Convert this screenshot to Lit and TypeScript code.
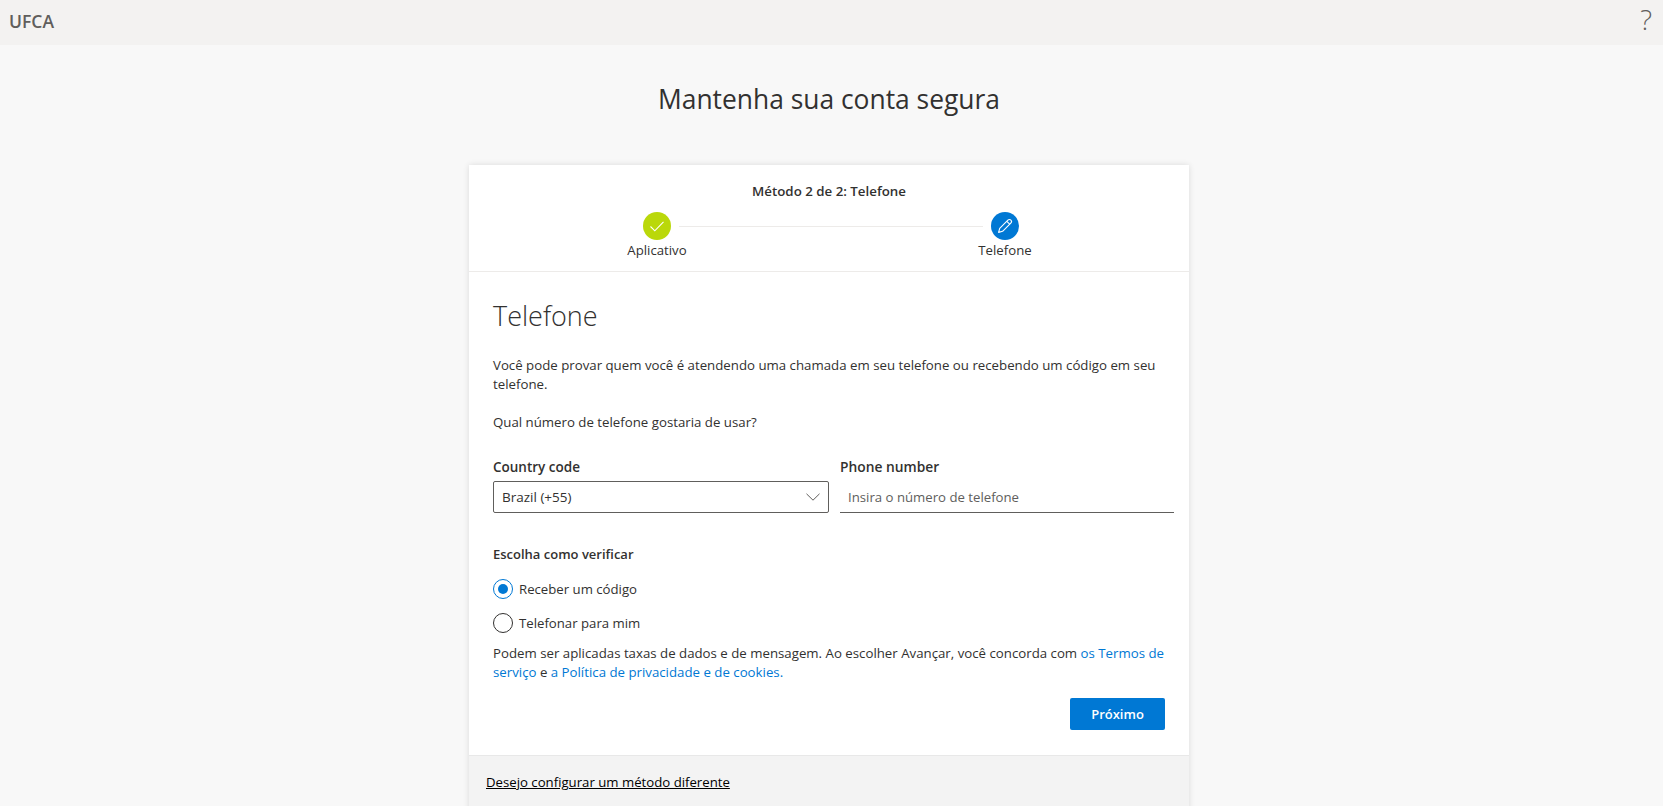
import { LitElement, html, css } from "lit";
import { customElement } from "lit/decorators.js";

@customElement("app-root")
export class AppRoot extends LitElement {
  static styles = css`
    :host { display: block; height: 806px; overflow: hidden; background: #f8f8f8; color: #323130; font-family: "Open Sans", "Noto Sans", sans-serif; font-size: 13.2px; }
    .topbar { height: 45px; background: #f3f2f1; display: flex; align-items: center; justify-content: space-between; padding: 0 9px 4px; box-sizing: border-box; }
    .org { font-size: 17.5px; font-weight: 600; color: #605e5c; }
    .help { font-size: 28px; font-weight: 300; color: #605e5c; line-height: 1; margin-top: -3px; margin-right: 2px; }
    .page { padding-right: 5px; }
    h1 { margin: 0; height: 120px; padding-top: 34px; box-sizing: border-box; text-align: center; font-size: 26.4px; line-height: 40px; font-weight: 400; color: #323130; }
    .card { width: 720px; margin: 0 auto; background: #fff; box-shadow: 0 0 6px rgba(0,0,0,.12); }
    .head { height: 106px; border-bottom: 1px solid #edebe9; }
    .method { text-align: center; font-weight: 600; font-size: 13.3px; line-height: 18px; padding-top: 17px; }
    .stepper { display: grid; grid-template-columns: 96px 1fr 96px; width: 444px; margin: 12px 0 0 140px; }
    .step { display: flex; flex-direction: column; align-items: center; gap: 1px; }
    .circle { width: 28px; height: 28px; border-radius: 50%; display: flex; align-items: center; justify-content: center; }
    .done { background: #bad80a; }
    .active { background: #0078d4; }
    .step-label { font-size: 13.2px; line-height: 18px; white-space: nowrap; }
    .connector { height: 1px; background: #edebe9; margin: 14px -26px 0; }
    .body { padding: 0 24px; height: 483px; box-sizing: border-box; }
    h2 { margin: 0; padding-top: 24px; font-size: 27px; line-height: 40px; font-weight: 300; color: #323130; }
    p { margin: 0; line-height: 19px; font-size: 13.25px; }
    .intro { margin-top: 20px; }
    .question { margin-top: 19px; }
    .fields { display: grid; grid-template-columns: 336px 334px; column-gap: 11px; margin: 25px -9px 0 0; }
    .label { font-weight: 600; line-height: 20px; margin-bottom: 4px; }
    .label.country { font-size: 13.5px; }
    .label.phone { font-size: 13.8px; }
    .select { height: 32px; box-sizing: border-box; border: 1px solid #605e5c; border-radius: 2px; display: flex; align-items: center; justify-content: space-between; padding: 0 8px; font-size: 13.5px; }
    .input { height: 32px; box-sizing: border-box; border-bottom: 1px solid #605e5c; display: flex; align-items: center; padding: 0 8px; color: #605e5c; }
    .verify { font-weight: 600; font-size: 13px; line-height: 20px; margin-top: 31px; }
    .radios { display: flex; flex-direction: column; gap: 14px; margin-top: 15px; }
    .radio { display: flex; align-items: center; gap: 6px; height: 20px; }
    .dot { width: 20px; height: 20px; box-sizing: border-box; border-radius: 50%; border: 1px solid #323130; display: flex; align-items: center; justify-content: center; }
    .dot.on { border-color: #0078d4; }
    .dot.on::after { content: ""; width: 10px; height: 10px; border-radius: 50%; background: #0078d4; }
    .terms { margin-top: 11px; }
    a { color: #0078d4; text-decoration: none; }
    .actions { display: flex; justify-content: flex-end; margin-top: 16px; }
    .btn { width: 95px; height: 32px; border: 0; border-radius: 2px; background: #0078d4; color: #fff; font: 600 13px "Open Sans", sans-serif; }
    .foot { height: 60px; background: #f3f3f3; border-top: 1px solid #e8e8e8; padding: 16px 17px 0; box-sizing: border-box; line-height: 20px; }
    .foot a { color: #000; text-decoration: underline; }
  `;

  render() {
    return html`
      <div class="topbar">
        <span class="org">UFCA</span>
        <span class="help">?</span>
      </div>
      <div class="page">
        <h1>Mantenha sua conta segura</h1>
        <section class="card">
          <div class="head">
            <div class="method">Método 2 de 2: Telefone</div>
            <div class="stepper">
              <div class="step">
                <span class="circle done">
                  <svg width="16" height="16" viewBox="0 0 16 16" fill="none" stroke="#fff" stroke-width="1.1"><path d="M1.5 8.5 L5.8 12.8 L14.5 3.8"/></svg>
                </span>
                <span class="step-label">Aplicativo</span>
              </div>
              <div class="connector"></div>
              <div class="step">
                <span class="circle active">
                  <svg width="16" height="16" viewBox="0 0 16 16" fill="none" stroke="#fff" stroke-width="1.1" stroke-linejoin="round"><path d="M1.6 14.4 L2.7 10.4 L10.9 2.2 C11.8 1.3 13.1 1.3 13.9 2.1 C14.7 2.9 14.7 4.2 13.8 5.1 L5.6 13.3 Z"/><path d="M9.8 3.3 L12.7 6.2"/></svg>
                </span>
                <span class="step-label">Telefone</span>
              </div>
            </div>
          </div>
          <div class="body">
            <h2>Telefone</h2>
            <p class="intro">Você pode provar quem você é atendendo uma chamada em seu telefone ou recebendo um código em seu telefone.</p>
            <p class="question">Qual número de telefone gostaria de usar?</p>
            <div class="fields">
              <div>
                <div class="label country">Country code</div>
                <div class="select">
                  <span>Brazil (+55)</span>
                  <svg width="14" height="8" viewBox="0 0 14 8" fill="none" stroke="#605e5c" stroke-width="1"><path d="M.5.8 7 7.2 13.5.8"/></svg>
                </div>
              </div>
              <div>
                <div class="label phone">Phone number</div>
                <div class="input">Insira o número de telefone</div>
              </div>
            </div>
            <div class="verify">Escolha como verificar</div>
            <div class="radios">
              <div class="radio"><span class="dot on"></span>Receber um código</div>
              <div class="radio"><span class="dot"></span>Telefonar para mim</div>
            </div>
            <p class="terms">Podem ser aplicadas taxas de dados e de mensagem. Ao escolher Avançar, você concorda com <a>os Termos de serviço</a> e <a>a Política de privacidade e de cookies.</a></p>
            <div class="actions"><button class="btn">Próximo</button></div>
          </div>
          <div class="foot"><a>Desejo configurar um método diferente</a></div>
        </section>
      </div>
    `;
  }
}
